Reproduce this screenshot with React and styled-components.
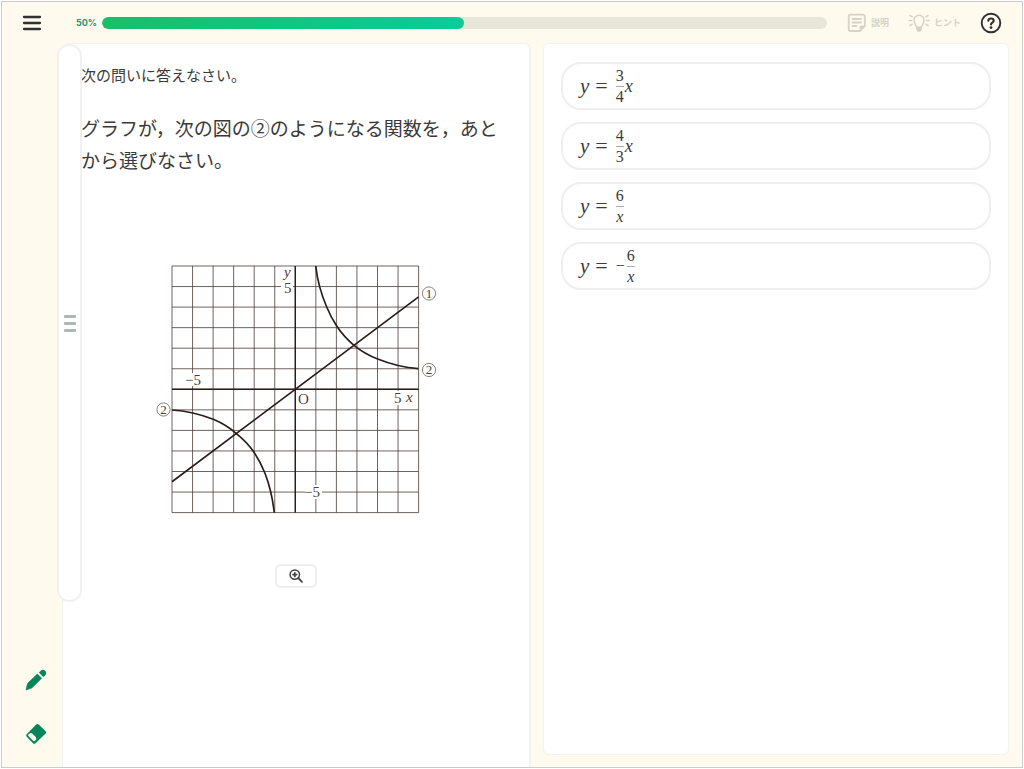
import React from "react";
import styled, { createGlobalStyle, css } from "styled-components";

// constants
const UNIT = 20.55;
const ORIGIN = { x: 141.3, y: 125.3 };
const HALF = 6;
const GRAPH_COLOR = "#2b1d1b";

const px = x => ORIGIN.x + x * UNIT;
const py = y => ORIGIN.y - y * UNIT;

const OPTIONS = [
  { id: "a", top: "3", bottom: "4", tail: "x" },
  { id: "b", top: "4", bottom: "3", tail: "x" },
  { id: "c", top: "6", bottom: "x" },
  { id: "d", negative: true, top: "6", bottom: "x" }
];

const MenuIcon = () => (
  <svg width="20" height="18" viewBox="0 0 20 18" aria-hidden="true">
    <path
      d="M2 3H18M2 9H18M2 15H18"
      stroke="#2f3133"
      strokeWidth="2.3"
      strokeLinecap="round"
    />
  </svg>
);

const NoteIcon = () => (
  <svg width="20" height="20" viewBox="0 0 20 20" fill="none" aria-hidden="true">
    <path
      d="M13 18H3.5A1.8 1.8 0 0 1 1.7 16.2V3.5A1.8 1.8 0 0 1 3.5 1.7H16A1.8 1.8 0 0 1 17.8 3.5V13Z"
      stroke="currentColor"
      strokeWidth="1.8"
      strokeLinejoin="round"
    />
    <path d="M18 12.5H13.8Q12.5 12.5 12.5 13.8V18Z" fill="currentColor" />
    <path
      d="M5.500 6H14M5.500 9.500H14M5.500 13H9.500"
      stroke="currentColor"
      strokeWidth="1.8"
      strokeLinecap="round"
    />
  </svg>
);

const BulbIcon = () => (
  <svg width="22" height="20" viewBox="0 0 22 20" fill="none" aria-hidden="true">
    <path
      d="M8.5 14.2C8.5 11.8 6 11 6 7.3A5 5 0 0 1 16 7.3C16 11 13.5 11.8 13.5 14.2Z"
      stroke="currentColor"
      strokeWidth="1.5"
      strokeLinejoin="round"
    />
    <path d="M8.200 14.500H13.800V16.500L12.500 18.800H9.500L8.200 16.500Z" fill="currentColor" />
    <path
      d="M1 7.5H3.500M18.500 7.5H21M2 2.5L4.200 3.8M20 2.5L17.8 3.8M2 12.5L4.2 11.2M20 12.5L17.8 11.2"
      stroke="currentColor"
      strokeWidth="1.5"
      strokeLinecap="round"
    />
  </svg>
);

const HelpIcon = () => (
  <svg width="22" height="22" viewBox="0 0 22 22" fill="none" aria-hidden="true">
    <circle cx="11" cy="11" r="9.3" stroke="#2f3133" strokeWidth="1.9" />
    <path
      d="M8.3 8.7C8.5 5.7 13.6 5.7 13.7 8.7C13.7 10.6 11 10.5 11 12.5"
      stroke="#2f3133"
      strokeWidth="2.1"
      strokeLinecap="round"
    />
    <circle cx="11" cy="15.6" r="1.4" fill="#2f3133" />
  </svg>
);

const PencilIcon = () => (
  <svg width="22" height="22" viewBox="0 0 22 22" aria-hidden="true">
    <path
      d="M1 21L2.3 15.3Q2.6 14.3 3.4 13.5L12.4 5L16.6 9.3L7.8 18Q7 18.9 6 19.3Z"
      fill="#05855a"
      stroke="#05855a"
      strokeWidth="0.6"
      strokeLinejoin="round"
    />
    <path
      d="M13.9 3.6L15.5 1.9A3.4 3.4 0 0 1 20.3 1.9A3.4 3.4 0 0 1 20.3 6.2L18.2 8Z"
      fill="#05855a"
    />
  </svg>
);

const EraserIcon = () => (
  <svg width="22" height="22" viewBox="0 0 22 22" aria-hidden="true">
    <path
      d="M11.2 1.600Q12.500 0.600 13.8 1.600L20.600 8.200Q21.600 9.300 20.600 10.500L10.500 20.200Q9.200 21.200 8 20.200L1.700 13.800Q0.700 12.500 1.700 11.200Z"
      fill="#05855a"
    />
    <path
      d="M3.3 11.6Q5 9 7.2 10.500L11 14.300Q12.300 16.200 9.900 18.100Q9 18.500 8.200 17.700L3.400 13.100Q2.700 12.300 3.300 11.600Z"
      fill="#fffaee"
    />
  </svg>
);

const ZoomIcon = () => (
  <svg width="14" height="14" viewBox="0 0 14 14" fill="none" aria-hidden="true">
    <circle cx="5.8" cy="5.6" r="4.7" stroke="#444" strokeWidth="1.5" />
    <path
      d="M9.2 9L13 12.8M4 5.6H7.6M5.8 3.8V7.4"
      stroke="#444"
      strokeWidth="1.8"
      strokeLinecap="round"
    />
  </svg>
);

const Mark = ({ x, y, children }) => (
  <g>
    <circle cx={x} cy={y} r="6.6" fill="#fff" stroke="#6a5f5d" strokeWidth="0.8" />
    <text x={x} y={y + 4.3} fontSize="13" textAnchor="middle">
      {children}
    </text>
  </g>
);

const Graph = () => {
  const steps = Array.from({ length: HALF * 2 + 1 }, (_, i) => i - HALF);

  return (
    <GraphSvg viewBox="0 0 284 252" role="img" aria-label="グラフ">
      <g stroke="#4b3b39" strokeWidth="0.8">
        {steps.map(n => (
          <React.Fragment key={n}>
            <line x1={px(n)} x2={px(n)} y1={py(HALF)} y2={py(-HALF)} />
            <line x1={px(-HALF)} x2={px(HALF)} y1={py(n)} y2={py(n)} />
          </React.Fragment>
        ))}
      </g>
      <g fill="#fff">
        <rect x="127" y="5" width="12" height="27" />
        <rect x="30" y="109" width="18" height="13" />
        <rect x="238" y="127" width="12" height="14" />
        <rect x="151" y="221" width="17" height="14" />
      </g>
      <g fill="none" stroke={GRAPH_COLOR}>
        <path
          d={`M${px(0)} ${py(HALF)}V${py(-HALF)}M${px(-HALF)} ${py(0)}H${px(HALF)}`}
          strokeWidth="1.4"
        />
        <g strokeWidth="1.7">
          <path d={`M${px(-6)} ${py(-4.5)}L${px(6)} ${py(4.5)}`} />
          <path d="M161.7 2C163.500 17 167.500 31 172.700 43C176 51 179 56.500 182.700 62C188 70 193 75.500 200 81.300C207 87 215 91.600 223.700 95C235 99.500 248 103.500 264.300 104.700" />
          <path d="M18 146C33 147 47 150.500 59.300 155.300C68 159 75.500 163.500 82 169.300C90 175.500 95.500 181.500 100 188.300C104.500 195 108 202 111 209.300C115.500 221 118.500 233 120.300 248.700" />
        </g>
      </g>
      <g fill="#4a3f3d" fontFamily="'Liberation Serif', serif" fontSize="15">
        <text x="130" y="13" fontStyle="italic">
          y
        </text>
        <text x="130" y="29">
          5
        </text>
        <text x="31" y="121">
          −5
        </text>
        <text x="144" y="140">
          O
        </text>
        <text x="240" y="139">
          5
        </text>
        <text x="252" y="138" fontStyle="italic">
          x
        </text>
        <text x="150" y="233">
          −5
        </text>
        <Mark x={275} y={29.5}>
          1
        </Mark>
        <Mark x={275} y={106}>
          2
        </Mark>
        <Mark x={9.5} y={145.5}>
          2
        </Mark>
      </g>
    </GraphSvg>
  );
};

const Formula = ({ negative, top, bottom, tail }) => (
  <Math>
    <Variable>y</Variable>
    <Equals>=</Equals>
    {negative && <Minus>−</Minus>}
    <Fraction>
      <Term>{top}</Term>
      <Term divided italic={bottom === "x"}>
        {bottom}
      </Term>
    </Fraction>
    {tail && <Tail>{tail}</Tail>}
  </Math>
);

export default () => {
  const [selected, setSelected] = React.useState(null);

  return (
    <Page>
      <GlobalStyle />
      <Frame>
        <Header>
          <IconButton aria-label="メニュー">
            <MenuIcon />
          </IconButton>
          <Percent id="progress-label">50%</Percent>
          <Track
            role="progressbar"
            aria-labelledby="progress-label"
            aria-valuenow={50}
          >
            <Bar style={{ width: "50%" }} />
          </Track>
          <Tools>
            <ToolButton disabled>
              <NoteIcon />
              説明
            </ToolButton>
            <ToolButton disabled>
              <BulbIcon />
              ヒント
            </ToolButton>
            <IconButton aria-label="ヘルプ">
              <HelpIcon />
            </IconButton>
          </Tools>
        </Header>
        <Body>
          <Sidebar>
            <IconButton aria-label="ペン">
              <PencilIcon />
            </IconButton>
            <IconButton aria-label="消しゴム">
              <EraserIcon />
            </IconButton>
          </Sidebar>
          <Question>
            <Handle aria-label="パネルを動かす">
              <Grip />
              <Grip />
              <Grip />
            </Handle>
            <Lead>次の問いに答えなさい。</Lead>
            <Text>
              グラフが，次の図の②のようになる関数を，あとから選びなさい。
            </Text>
            <Figure>
              <Graph />
              <ZoomButton aria-label="拡大">
                <ZoomIcon />
              </ZoomButton>
            </Figure>
          </Question>
          <Answers>
            {OPTIONS.map(({ id, ...formula }) => (
              <Option
                key={id}
                selected={selected === id}
                onClick={() => setSelected(id)}
              >
                <Formula {...formula} />
              </Option>
            ))}
          </Answers>
        </Body>
      </Frame>
    </Page>
  );
};

const GlobalStyle = createGlobalStyle`
  * {
    box-sizing: border-box;
  }
  body {
    margin: 0;
    background: #fff;
    color: #3a3a3a;
    font-family: "Noto Sans CJK JP", sans-serif;
  }
  button {
    padding: 0;
    border: 0;
    background: none;
    color: inherit;
    font: inherit;
    cursor: pointer;
  }
`;

const Page = styled.div`
  display: flex;
  min-height: 100vh;
  padding: 1px;
`;

const Frame = styled.div`
  display: flex;
  flex-direction: column;
  flex: 1;
  min-width: 0;
  border: 1px solid #ccc;
  background: #fffaee;
`;

const Header = styled.header`
  display: flex;
  align-items: center;
  height: 41px;
  padding: 0 20px;
`;

const IconButton = styled.button`
  display: flex;
`;

const Percent = styled.span`
  width: 26px;
  margin-left: 34px;
  color: #22996a;
  font-family: Inter, sans-serif;
  font-size: 9px;
  font-weight: 700;
`;

const Track = styled.div`
  flex: 1;
  height: 12px;
  border-radius: 6px;
  background: #e8e6d9;
  overflow: hidden;
`;

const Bar = styled.div`
  height: 100%;
  border-radius: 6px;
  background: linear-gradient(90deg, #16c068, #06cd9a);
`;

const Tools = styled.div`
  display: flex;
  align-items: center;
  gap: 19px;
  margin-left: 20px;
`;

const ToolButton = styled.button`
  && {
    display: flex;
    align-items: center;
    gap: 4px;
    color: #d6d3c6;
    font-size: 9px;
    font-weight: 700;
  }
`;

const Body = styled.main`
  display: flex;
  flex: 1;
  padding-right: 13px;
`;

const Sidebar = styled.aside`
  display: flex;
  flex-direction: column;
  align-items: center;
  justify-content: flex-end;
  gap: 32px;
  width: 60px;
  padding: 0 0 22px 7px;
`;

const panel = css`
  flex: 1 1 0;
  min-width: 0;
  border: 1px solid #f2f2ee;
  background: #fff;
`;

const Question = styled.section`
  ${panel};
  position: relative;
  padding: 15px 18px;
  border-width: 1px 2px 0 1px;
  border-radius: 6px 6px 0 0;
`;

const Handle = styled.button`
  && {
    position: absolute;
    top: 0;
    bottom: 165px;
    left: -6px;
    display: flex;
    flex-direction: column;
    align-items: center;
    justify-content: center;
    gap: 4px;
    width: 25px;
    border: 2px solid #f1f1ef;
    border-radius: 12px;
    background: #fff;
  }
`;

const Grip = styled.span`
  width: 12px;
  height: 3px;
  border-radius: 1px;
  background: #a9b9b3;
`;

const Lead = styled.p`
  margin: 0;
  font-size: 15px;
  line-height: 32px;
`;

const Text = styled.p`
  margin: 21px 0 0;
  font-size: 19px;
  line-height: 32px;
`;

const Figure = styled.div`
  display: flex;
  flex-direction: column;
  align-items: center;
  gap: 48px;
  margin-top: 88px;
`;

const GraphSvg = styled.svg`
  width: 284px;
  max-width: 100%;
`;

const ZoomButton = styled.button`
  && {
    display: flex;
    align-items: center;
    justify-content: center;
    width: 42px;
    height: 24px;
    border: 2px solid #eeefef;
    border-radius: 5px;
  }
`;

const Answers = styled.section`
  ${panel};
  display: flex;
  flex-direction: column;
  gap: 12px;
  margin: 0 0 12px 12px;
  padding: 18px 17px;
  border-radius: 6px;
`;

const Option = styled.button.withConfig({
  shouldForwardProp: prop => prop !== "selected"
})`
  && {
    display: flex;
    align-items: center;
    height: 48px;
    padding: 0 17px;
    border: 2px solid ${p => (p.selected ? "#06cd9a" : "#eef0f0")};
    border-radius: 20px;
  }
`;

const Math = styled.span`
  display: flex;
  align-items: center;
  font-family: "Liberation Serif", serif;
  font-size: 16px;
  line-height: 20px;
`;

const Variable = styled.i`
  font-size: 21px;
`;

const Equals = styled.span`
  margin: 0 8px 0 6px;
  font-size: 22px;
`;

const Minus = styled.span`
  margin-right: 2px;
`;

const Fraction = styled.span`
  display: flex;
  flex-direction: column;
`;

const Term = styled.span.withConfig({
  shouldForwardProp: prop => prop !== "divided" && prop !== "italic"
})`
  border-top: ${p => (p.divided ? "1px solid #aaa" : "0")};
  font-style: ${p => (p.italic ? "italic" : "normal")};
  text-align: center;
`;

const Tail = styled.i`
  margin-left: 1px;
  font-size: 18px;
`;
